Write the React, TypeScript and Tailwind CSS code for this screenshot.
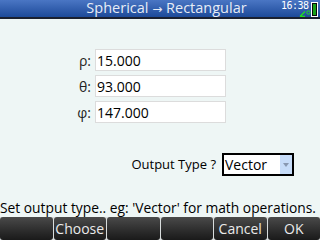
const fields = [
  { label: 'ρ:', value: '15.000' },
  { label: 'θ:', value: '93.000' },
  { label: 'φ:', value: '147.000' },
];

const keys = ['', 'Choose', '', '', 'Cancel', 'OK'];

export default function App() {
  return (
    <div className="w-[320px] h-[240px] flex flex-col bg-[#eef6f5] overflow-hidden font-['Open_Sans',sans-serif] text-black">
      {/* title bar */}
      <div className="relative h-[19px] shrink-0 bg-gradient-to-b from-[#4a76c4] to-[#1d4a99] border-b-2 border-[#1a2030] flex items-center justify-center">
        <span className="text-[14.5px] leading-[17px] text-[#e6ecf6] pl-[13px] whitespace-nowrap">
          Spherical <span className="font-['DejaVu_Sans',sans-serif] text-[12px]">→</span> Rectangular
        </span>
        <span className="absolute left-[281px] top-[1px] text-[10px] leading-none text-white font-['DejaVu_Sans_Mono',monospace] tracking-[-0.5px]">16:38</span>
        <svg className="absolute left-[299px] top-[10px]" width="12" height="7" viewBox="0 0 12 7">
          <path d="M1 6.5 L6 1.5 M1 6.5 H6" stroke="#22dd22" strokeWidth="1.3" fill="none" />
          <circle cx="9.5" cy="2.5" r="1.7" stroke="#22dd22" strokeWidth="1" fill="none" />
        </svg>
        <div className="absolute left-[311px] top-[2px] w-[7px] h-[15px] border border-white bg-[#0a0a0a] p-[1px]">
          <div className="w-full h-full bg-[#18a018]" />
        </div>
      </div>

      {/* fields */}
      <div className="flex flex-col gap-[4px] mt-[30px] pl-[73px]">
        {fields.map((f) => (
          <div key={f.label} className="flex items-center h-[22px]">
            <span className="w-[18px] text-right text-[14px] text-[#222]">{f.label}</span>
            <div className="ml-[4px] w-[131px] h-[22px] bg-white border border-[#dcdcdc] flex items-center pl-[1px] text-[14px]">
              {f.value}
            </div>
          </div>
        ))}
      </div>

      {/* output type */}
      <div className="flex items-center justify-end mt-[30px] pr-[26px]">
        <span className="text-[13px] mr-[6px]">Output Type ?</span>
        <div className="w-[72px] h-[23px] bg-white border-2 border-black flex items-center">
          <span className="flex-1 text-[14px] pl-[1px]">Vector</span>
          <div className="w-[12px] h-full bg-[#c6dcf8] flex items-center justify-center">
            <svg width="6" height="4" viewBox="0 0 6 4">
              <path d="M0 0 H6 L3 4 Z" fill="#8898b0" />
            </svg>
          </div>
        </div>
      </div>

      {/* status */}
      <div className="mt-auto text-[13.8px] leading-none whitespace-nowrap pb-[2px]">
        Set output type.. eg: 'Vector' for math operations.
      </div>

      {/* soft keys */}
      <div className="h-[23px] shrink-0 flex gap-[1px] bg-[#d8dcdc]">
        {keys.map((k, i) => (
          <div
            key={i}
            className="flex-1 rounded-[3px] bg-gradient-to-b from-[#4a4a4a] to-[#1a1a1a] flex items-center justify-center text-[14px] text-[#eaeaea]"
          >
            {k}
          </div>
        ))}
      </div>
    </div>
  );
}
